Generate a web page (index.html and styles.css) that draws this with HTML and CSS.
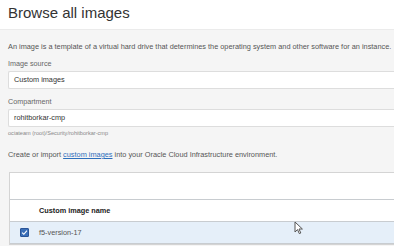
FILE: index.html
```html
<!DOCTYPE html>
<html lang="en">
<head>
    <meta charset="UTF-8">
    <title>Browse all images</title>
    <link rel="stylesheet" href="styles.css">
</head>
<body>
    <header class="page-header">
        <h1>Browse all images</h1>
    </header>

    <div class="content">
        <p class="intro">An image is a template of a virtual hard drive that determines the operating system and other software for an instance.</p>

        <label class="field-label">Image source</label>
        <div class="field">Custom images</div>

        <label class="field-label">Compartment</label>
        <div class="field">rohitborkar-cmp</div>
        <p class="hint">ociateam (root)/Security/rohitborkar-cmp</p>

        <p class="intro create">Create or import <a href="#">custom images</a> into your Oracle Cloud Infrastructure environment.</p>

        <div class="table-panel">
            <div class="toolbar"></div>
            <div class="row head">
                <span class="cell-check"></span>
                <span class="cell-name">Custom image name</span>
            </div>
            <div class="row selected">
                <span class="cell-check"><span class="checkbox">
                    <svg width="7" height="7" viewBox="0 0 8 8"><path d="M1.2 4.2 L3.2 6 L6.8 1.8" fill="none" stroke="#fff" stroke-width="1.3"/></svg>
                </span></span>
                <span class="cell-name">f5-version-17</span>
            </div>
        </div>
    </div>

    <svg class="cursor" width="10" height="14" viewBox="0 0 10 14">
        <path d="M1 1 L1 11 L3.5 8.6 L5.3 12.6 L6.8 12 L5 8 L8.4 8 Z" fill="#fff" stroke="#555" stroke-width="1"/>
    </svg>
</body>
</html>
```

FILE: styles.css
```css
body {
    margin: 0;
    font-family: "Liberation Sans", Arial, sans-serif;
    background: #f5f5f5;
    color: #555;
}

.page-header {
    background: #fff;
    border-bottom: 1px solid #ebebeb;
    height: 29px;
    padding: 0 8px;
}

.page-header h1 {
    margin: 0;
    padding-top: 2px;
    font-size: 15px;
    font-weight: normal;
    color: #333;
    line-height: 22px;
}

.content {
    padding: 0 0 0 8px;
}

.intro {
    margin: 12px 0 0;
    font-size: 7.35px;
    line-height: 10px;
    color: #555;
    white-space: nowrap;
}

.field-label {
    display: block;
    margin-top: 7px;
    font-size: 7.2px;
    line-height: 10px;
    color: #666;
}

.field {
    margin-top: 2px;
    height: 16px;
    background: #fff;
    border: 1px solid #ddd;
    border-right: none;
    border-radius: 2px 0 0 2px;
    padding-left: 5px;
    font-size: 7.3px;
    line-height: 16px;
    color: #333;
}

.field + .field-label {
    margin-top: 8px;
}

.hint {
    margin: 2px 0 0;
    font-size: 5.6px;
    line-height: 8px;
    color: #888;
}

.create {
    margin-top: 13px;
}

.create a {
    color: #2e6fbc;
}

.table-panel {
    margin-top: 12px;
    margin-left: 1px;
    background: #fff;
    border: 1px solid #d4d4d4;
    border-right: none;
}

.toolbar {
    height: 26px;
    border-bottom: 1px solid #c8ccd0;
}

.row {
    display: flex;
    align-items: center;
    height: 21px;
    border-bottom: 1px solid #c8ccd0;
    font-size: 7.3px;
}

.row.head .cell-name {
    font-weight: bold;
    color: #222;
}

.row.selected {
    background: #e5eff9;
    color: #555;
}

.cell-check {
    width: 29px;
    display: flex;
    justify-content: center;
}

.checkbox {
    width: 9px;
    height: 9px;
    background: #3a6fb8;
    border: 1px solid #2a5598;
    border-radius: 1px;
    display: flex;
    align-items: center;
    justify-content: center;
    box-sizing: border-box;
}

.cursor {
    position: absolute;
    left: 294px;
    top: 221px;
}
```
